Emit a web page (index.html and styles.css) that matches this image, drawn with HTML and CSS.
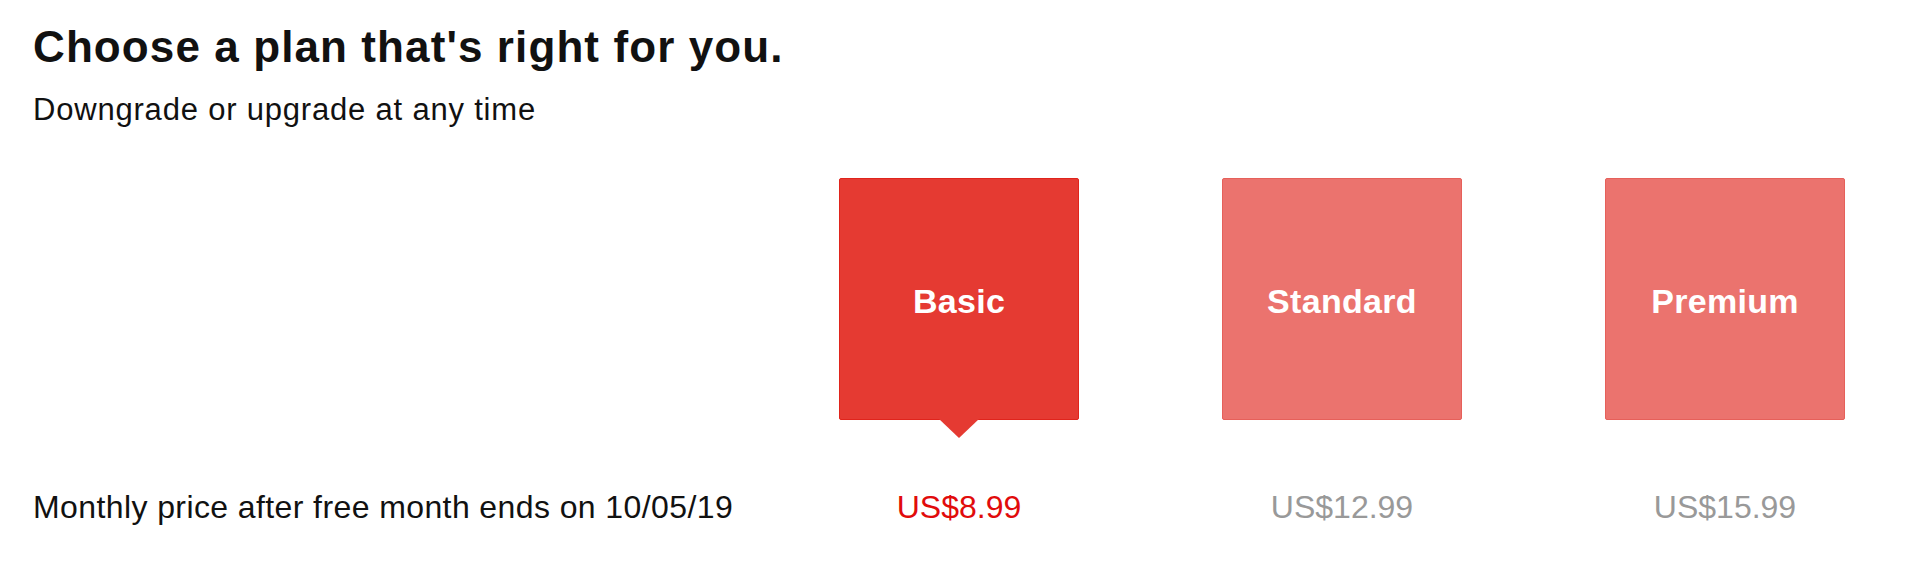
FILE: index.html
```html
<!DOCTYPE html>
<html lang="en">
<head>
  <meta charset="UTF-8">
  <meta name="viewport" content="width=device-width, initial-scale=1.0">
  <title>Choose a plan</title>
  <link rel="stylesheet" href="styles.css">
</head>
<body>
  <div class="page">
    <h1 class="title">Choose a plan that's right for you.</h1>
    <p class="subtitle">Downgrade or upgrade at any time</p>

    <div class="plan-grid">
      <div class="spacer"></div>
      <div class="plan-box selected">Basic</div>
      <div class="plan-box">Standard</div>
      <div class="plan-box">Premium</div>

      <div class="row-label">Monthly price after free month ends on 10/05/19</div>
      <div class="price selected">US$8.99</div>
      <div class="price">US$12.99</div>
      <div class="price">US$15.99</div>
    </div>
  </div>
</body>
</html>
```

FILE: styles.css
```css
body { margin: 0; background: #fff; color: #111; font-family: "Liberation Sans", Arial, Helvetica, sans-serif; }
.page { padding: 22px 75px 0 33px; }
.title { margin: 0; font-size: 44px; line-height: 50px; font-weight: bold; letter-spacing: 1.1px; }
.subtitle { margin: 20px 0 0; font-size: 31px; line-height: 36px; letter-spacing: 0.8px; }

.plan-grid { display: grid; grid-template-columns: minmax(0, 1fr) 240px 240px 240px; column-gap: 143px; row-gap: 69px; margin-top: 50px; }
.plan-box { position: relative; height: 242px; box-sizing: border-box; padding-top: 5px; display: flex; align-items: center; justify-content: center; background: #eb736e; border: 1px solid #e6605a; border-radius: 2px; color: #fff; font-size: 34px; font-weight: bold; letter-spacing: 0.3px; }
.plan-box.selected { background: #e53a32; border-color: #e0241c; }
.plan-box.selected::after { content: ""; position: absolute; top: 100%; left: 50%; transform: translateX(-50%); border-left: 20px solid transparent; border-right: 20px solid transparent; border-top: 19px solid #e53a32; }

.row-label { font-size: 32px; line-height: 36px; white-space: nowrap; letter-spacing: 0.4px; color: #111; }
.price { text-align: center; font-size: 32px; line-height: 36px; color: #999; }
.price.selected { color: #e10b0b; }
```
